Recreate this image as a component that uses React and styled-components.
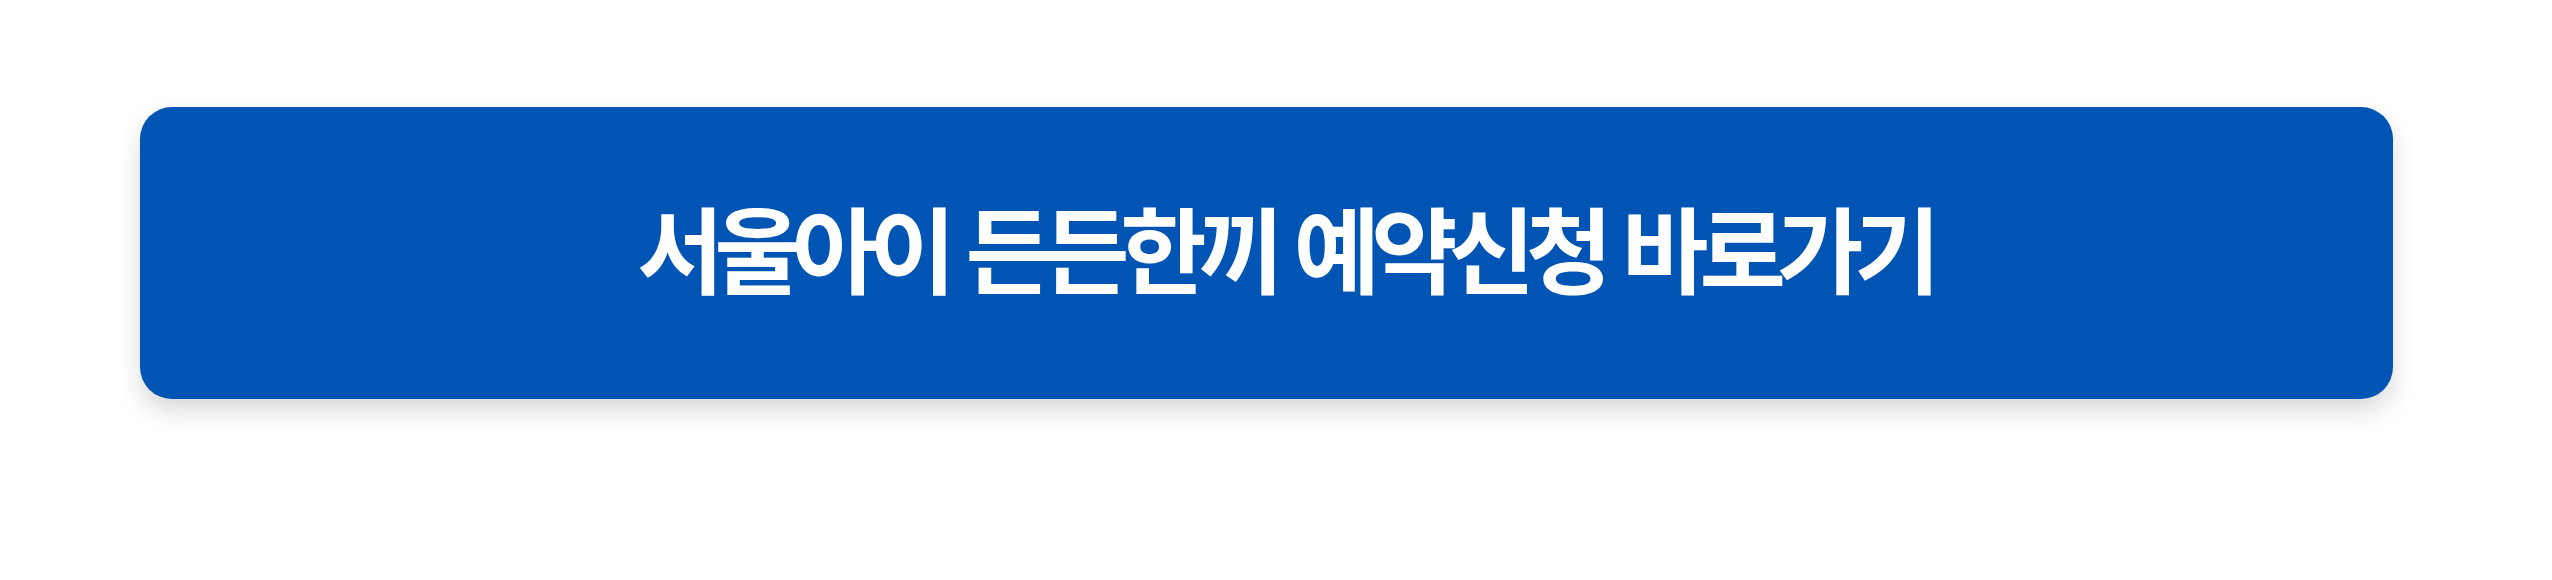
import styled, { createGlobalStyle } from 'styled-components'

const GlobalStyle = createGlobalStyle`
	html, body {
		margin: 0;
		padding: 0;
		background: #ffffff;
	}
	body {
		font-family: 'Noto Sans CJK KR', 'Noto Sans', sans-serif;
	}
`

const App = () => {
	return (
		<>
			<GlobalStyle />
			<Section>
				<ReserveButton href="#">서울아이 든든한끼 예약신청 바로가기</ReserveButton>
			</Section>
		</>
	)
}

export default App

const Section = styled.section`
	display: flex;
	height: 580px;
	box-sizing: border-box;
	padding: 107px 159px 0 140px;
	align-items: flex-start;
`

const ReserveButton = styled.a`
	flex: 1;
	height: 292px;
	display: flex;
	align-items: center;
	justify-content: center;
	background: #0054b3;
	border-radius: 32px;
	box-shadow: 0 12px 24px rgba(0, 0, 0, 0.15);
	color: #ffffff;
	text-decoration: none;
	font-family: 'Noto Sans CJK KR', sans-serif;
	font-size: 94px;
	font-weight: 700;
	letter-spacing: -9px;
	word-spacing: 6px;
	line-height: 1;
	padding: 0 0 14px 36px;
	box-sizing: border-box;
`
